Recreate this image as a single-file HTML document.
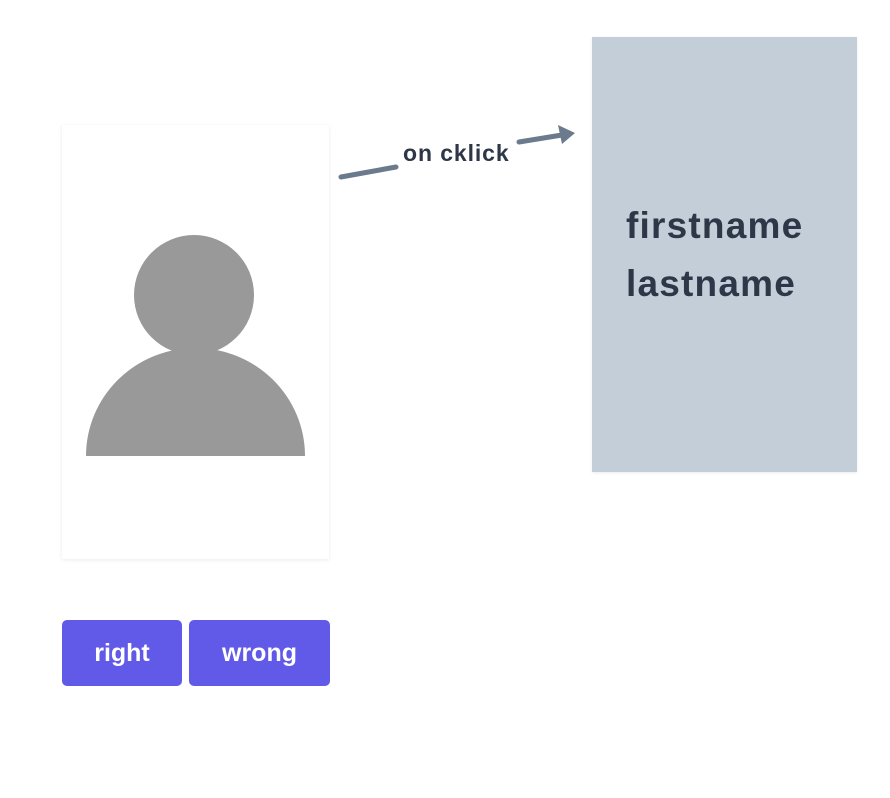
<!DOCTYPE html>
<html><head><style>
body{margin:0;width:890px;height:798px;background:#fff;position:relative;font-family:"Liberation Sans",sans-serif;overflow:hidden}
.card{position:absolute;left:62px;top:125px;width:267px;height:434px;background:#fff;box-shadow:0 1px 4px rgba(0,0,0,.08)}
.panel{position:absolute;left:592px;top:37px;width:265px;height:435px;background:#c3ced8;box-shadow:0 1px 3px rgba(0,0,0,.08)}
.name{position:absolute;left:626px;top:197px;font-size:37px;font-weight:bold;color:#2d3748;line-height:58px;letter-spacing:1.2px}
.btn{position:absolute;top:620px;height:66px;background:#6159e8;border-radius:5px;color:#fff;font-weight:bold;font-size:25px;line-height:66px;text-align:center}
.lbl{position:absolute;left:403px;top:140px;font-size:23px;font-weight:bold;color:#2d3748;letter-spacing:0.9px}
</style></head><body>
<div class="card"></div>
<svg style="position:absolute;left:0;top:0" width="890" height="798">
<circle cx="194" cy="295" r="60" fill="#999"/>
<path d="M86 456 A109.5 108 0 0 1 305 456 Z" fill="#999"/>
<g stroke="#6b7a8c" stroke-width="5" stroke-linecap="round" fill="none">
<line x1="341" y1="177" x2="396" y2="167"/>
<line x1="519" y1="142" x2="562" y2="135"/>
</g>
<path d="M558 125 L575 133 L562 144 Z" fill="#6b7a8c"/>
</svg>
<div class="lbl">on cklick</div>
<div class="panel"></div>
<div class="name">firstname<br>lastname</div>
<div class="btn" style="left:62px;width:120px">right</div>
<div class="btn" style="left:189px;width:141px">wrong</div>
</body></html>
